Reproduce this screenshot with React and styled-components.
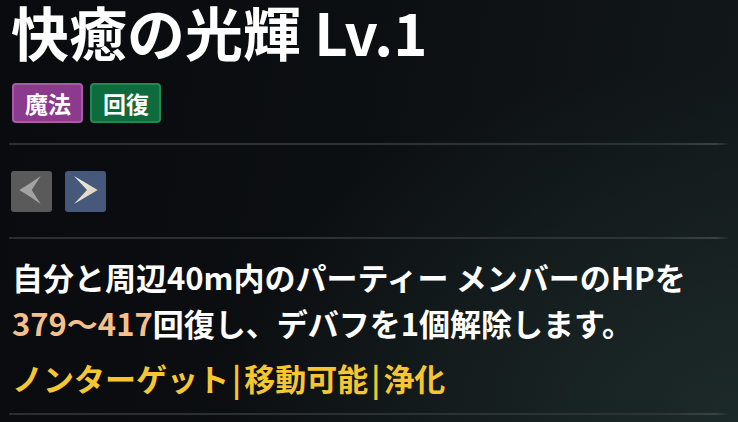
import React from "react";
import styled, { createGlobalStyle } from "styled-components";

const Global = createGlobalStyle`
  html, body { margin: 0; padding: 0; background: #0b0d10; }
  body { font-family: "Noto Sans CJK JP", "Noto Sans", sans-serif; }
`;

const Panel = styled.div`
  width: 738px;
  height: 422px;
  box-sizing: border-box;
  padding: 0 8px 0 9px;
  overflow: hidden;
  background:
    radial-gradient(ellipse 520px 360px at 100% 100%, rgba(32, 48, 46, 0.75), rgba(20, 28, 30, 0) 100%),
    linear-gradient(100deg, #090b0e 0%, #0c0f12 45%, #12181b 100%);
  display: flex;
  flex-direction: column;
`;

const Title = styled.h1`
  margin: 0;
  font-size: 58px;
  line-height: 62px;
  font-weight: 700;
  color: #ffffff;
  white-space: nowrap;
  padding-left: 2px;
`;

const TagRow = styled.div`
  display: flex;
  gap: 7px;
  margin-top: 21px;
  padding-left: 3px;
`;

const Tag = styled.span`
  height: 40px;
  box-sizing: border-box;
  padding: 0 10px 0 11px;
  display: inline-flex;
  align-items: center;
  border-radius: 4px;
  font-size: 23px;
  font-weight: 700;
  color: #ffffff;
  background: ${(p) => p.$bg};
  border: 2px solid ${(p) => p.$border};
`;

const Divider = styled.div`
  height: 2px;
  margin-top: ${(p) => p.$mt}px;
  background: linear-gradient(90deg, #2a2e32 0%, #2e3336 90%, #3a4242 98%, rgba(60, 70, 70, 0) 100%);
`;

const NavRow = styled.div`
  display: flex;
  gap: 13px;
  margin-top: 26px;
  padding-left: 2px;
`;

const NavButton = styled.div`
  width: 41px;
  height: 41px;
  border-radius: 3px;
  background: ${(p) => p.$bg};
  display: flex;
  align-items: center;
  justify-content: center;
`;

const Description = styled.p`
  margin: 15px 0 0 0;
  font-size: 31px;
  line-height: 46px;
  font-weight: 700;
  color: #ffffff;
  padding-left: 3px;
  white-space: nowrap;
`;

const Num = styled.span`
  color: #f5c08c;
`;

const Traits = styled.div`
  margin-top: 9px;
  font-size: 31px;
  line-height: 46px;
  font-weight: 700;
  color: #f6c630;
  padding-left: 3px;
  white-space: nowrap;
`;

const Pipe = styled.span`
  margin: 0 3px;
`;

const LeftArrow = () => (
  <svg width="41" height="41" viewBox="0 0 41 41">
    <path d="M29.7 5 Q20 12 8.3 19 Q20 26 29.7 33 L20.7 19 Z" fill="#a3a3a3" />
  </svg>
);

const RightArrow = () => (
  <svg width="41" height="41" viewBox="0 0 41 41">
    <defs>
      <linearGradient id="ra" x1="0" y1="0" x2="1" y2="1">
        <stop offset="0" stopColor="#f4efe4" />
        <stop offset="1" stopColor="#d8ccb8" />
      </linearGradient>
    </defs>
    <path d="M9 5 Q21 12 32.7 19 Q21 26 9 33 L22 19 Z" fill="url(#ra)" />
  </svg>
);

export default function App() {
  return (
    <>
      <Global />
      <Panel>
        <Title>快癒の光輝 Lv.1</Title>
        <TagRow>
          <Tag $bg="#8b3a8e" $border="#a75ba9">魔法</Tag>
          <Tag $bg="#0d6b3d" $border="#218a53">回復</Tag>
        </TagRow>
        <Divider $mt={20} />
        <NavRow>
          <NavButton $bg="#5a5a5b"><LeftArrow /></NavButton>
          <NavButton $bg="#46597a"><RightArrow /></NavButton>
        </NavRow>
        <Divider $mt={25} />
        <Description>
          自分と周辺40m内のパーティー メンバーのHPを
          <br />
          <Num>379〜417</Num>回復し、デバフを1個解除します。
        </Description>
        <Traits>
          ノンターゲット<Pipe>|</Pipe>移動可能<Pipe>|</Pipe>浄化
        </Traits>
        <Divider $mt={12} />
      </Panel>
    </>
  );
}
